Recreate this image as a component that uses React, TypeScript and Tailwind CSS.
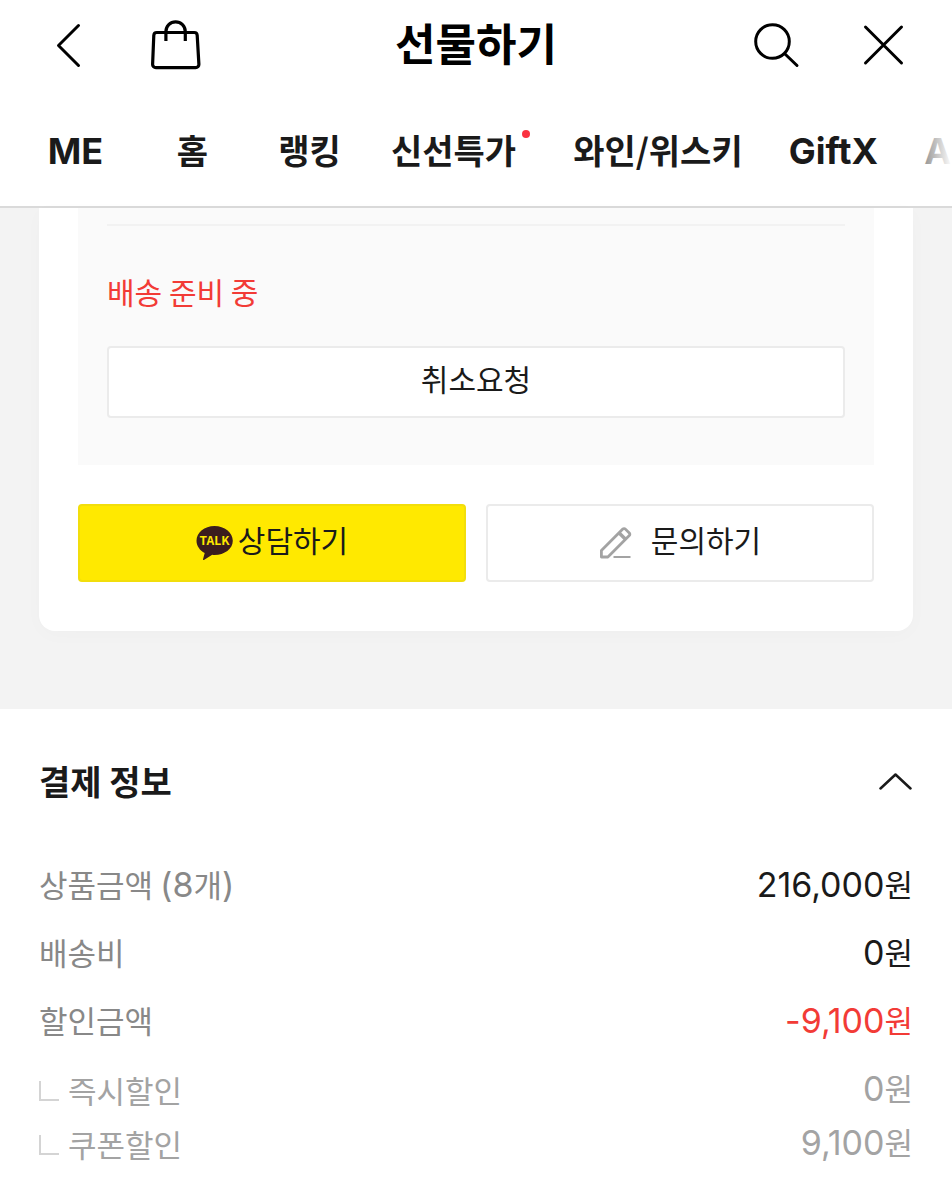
import { useState } from "react";
import type { ReactNode } from "react";

const tabs = [
  { name: "ME", latin: true },
  { name: "홈" },
  { name: "랭킹" },
  { name: "신선특가", isNew: true },
  { name: "와인/위스키" },
  { name: "GiftX", latin: true },
  { name: "A", latin: true },
];

const payments = [
  { label: "상품금액", count: 8, amount: "216,000" },
  { label: "배송비", amount: "0" },
  { label: "할인금액", amount: "-9,100", discount: true },
];

const discounts = [
  { label: "즉시할인", amount: "0" },
  { label: "쿠폰할인", amount: "9,100" },
];

function Latin({ children }: { children: ReactNode }) {
  return <span className="font-['Inter',sans-serif] text-[34px] leading-none">{children}</span>;
}

function BackIcon() {
  return (
    <svg viewBox="0 0 48 48" className="size-12" fill="none" stroke="currentColor" strokeWidth="3" strokeLinecap="round" strokeLinejoin="round" aria-hidden="true">
      <path d="M34.5 4.5 14.5 24.5 34.5 44.5" />
    </svg>
  );
}

function BagIcon() {
  return (
    <svg viewBox="0 0 48 52" className="h-[52px] w-12 overflow-visible" fill="none" stroke="currentColor" strokeWidth="3.200" strokeLinejoin="round" aria-hidden="true">
      <path d="M4.8 13.500h37.400a3 3 0 0 1 3 2.800l1.700 29a3.300 3.300 0 0 1-3.300 3.400H3.900a3.300 3.300 0 0 1-3.300-3.400l1.200-29a3 3 0 0 1 3-2.800Z" />
      <path d="M13.900 22v-9.500a9.700 9.700 0 0 1 19.400 0V22" />
    </svg>
  );
}

function SearchIcon() {
  return (
    <svg viewBox="0 0 48 48" className="size-12" fill="none" stroke="currentColor" strokeWidth="3" strokeLinecap="round" aria-hidden="true">
      <circle cx="20.500" cy="20.500" r="16.800" />
      <path d="M33 33 45 44.500" />
    </svg>
  );
}

function CloseIcon() {
  return (
    <svg viewBox="0 0 48 48" className="size-12" fill="none" stroke="currentColor" strokeWidth="3" strokeLinecap="round" aria-hidden="true">
      <path d="M5.500 6 41.500 42M41.500 6 5.500 42" />
    </svg>
  );
}

function TalkIcon() {
  return (
    <svg viewBox="0 0 38 36" className="h-9 w-[38px]" aria-hidden="true">
      <path d="M18.500 1C8.500 1 .5 7.500.5 15.700c0 5.200 3.300 9.700 8.200 12.300L7 34.300c-.2.700.4 1 .9.600l8.300-5.200c.9.100 1.600.2 2.300.2 10 0 18.300-6 18.300-14.200S28.500 1 18.500 1Z" fill="#3b1d1e" />
      <text x="18.500" y="20" textAnchor="middle" fontFamily="Noto Sans CJK KR, sans-serif" fontSize="12" fontWeight="700" fill="#ffe900">TALK</text>
    </svg>
  );
}

function PencilIcon() {
  return (
    <svg viewBox="0 0 34 34" className="size-[34px]" fill="none" stroke="#a3a3a3" strokeWidth="2.800" strokeLinejoin="round" aria-hidden="true">
      <path d="M2.400 31v-6.500L23.800 3.100a1.800 1.800 0 0 1 2.600 0l3.900 3.900a1.800 1.800 0 0 1 0 2.600L8.900 31Z" />
      <path d="M20.200 7 26.500 13.300" strokeWidth="3.500" />
      <path d="M14.500 31h17" strokeWidth="2" />
    </svg>
  );
}

export default function App() {
  const [open, setOpen] = useState(true);

  return (
    <div className="min-h-screen bg-white font-['Noto_Sans_CJK_KR',sans-serif] text-[#1a1a1a]">
      {/* HEADER */}
      <header className="border-b-2 border-[#dadada]">
        <div className="grid h-[90px] grid-cols-[1fr_auto_1fr] items-center px-11 text-black">
          <div className="flex items-center gap-[60px]">
            <button type="button" aria-label="뒤로">
              <BackIcon />
            </button>
            <button type="button" aria-label="쇼핑백">
              <BagIcon />
            </button>
          </div>
          <h1 className="pb-1.5 text-[44px] leading-none font-bold">선물하기</h1>
          <div className="flex items-center justify-end gap-[60px]">
            <button type="button" aria-label="검색">
              <SearchIcon />
            </button>
            <button type="button" aria-label="닫기">
              <CloseIcon />
            </button>
          </div>
        </div>

        <nav className="relative overflow-hidden">
          <div className="flex h-[116px] items-center pt-1 pl-[17px]">
            {tabs.map((tab) => (
              <a
                key={tab.name}
                href="#"
                className={`flex shrink-0 justify-center pl-[23px] leading-[48px] whitespace-nowrap ${
                  tab.isNew ? "pr-5" : "pr-[23px]"
                } ${tab.name === "A" ? "" : "min-w-[117px]"} ${
                  tab.latin ? "pt-0.5 font-['Inter',sans-serif] text-[36px] font-bold" : "text-[34px] font-semibold"
                }`}
              >
                {tab.name}
                {tab.isNew && <span className="mt-1 ml-1.5 size-2 rounded-full bg-[#fa3240]" />}
              </a>
            ))}
          </div>
          <div className="absolute inset-y-0 right-0 w-12 bg-linear-to-r from-white/20 to-white" />
        </nav>
      </header>

      {/* ORDER CARD */}
      <section className="bg-[#f3f3f3] px-[39px] pb-[78px]">
        <div className="rounded-b-2xl bg-white px-[39px] pb-[49px] shadow-[0_4px_20px_rgba(0,0,0,0.02)]">
          <div className="bg-[#fafafa] px-[29px] pt-4 pb-[47px]">
            <hr className="border-t-2 border-[#f2f2f2]" />
            <p className="pt-[41px] text-[30px] leading-[48px] text-[#f23b36]">배송 준비 중</p>
            <button
              type="button"
              className="mt-[31px] h-[72px] w-full rounded-[4px] border-2 border-[#ebebeb] bg-white pb-2 text-[30px]"
            >
              취소요청
            </button>
          </div>

          <div className="mt-[39px] grid grid-cols-2 gap-5">
            <button
              type="button"
              className="flex h-[78px] items-center justify-center gap-1 rounded-[4px] border-2 border-[#f2de0c] bg-[#ffe900] text-[30px]"
            >
              <TalkIcon />
              <span className="pb-2">상담하기</span>
            </button>
            <button
              type="button"
              className="flex h-[78px] items-center justify-center gap-[18px] rounded-[4px] border-2 border-[#ebebeb] text-[30px]"
            >
              <PencilIcon />
              <span className="pb-2">문의하기</span>
            </button>
          </div>
        </div>
      </section>

      {/* PAYMENT */}
      <section className="px-[39px] pb-[30px]">
        <button
          type="button"
          aria-expanded={open}
          onClick={() => setOpen(!open)}
          className="flex h-[144px] w-full items-center justify-between"
        >
          <h2 className="text-[34px] leading-[48px] font-bold">결제 정보</h2>
          <svg viewBox="0 0 34 20" className={`h-5 w-[34px] ${open ? "" : "rotate-180"}`} fill="none" stroke="currentColor" strokeWidth="2.500" strokeLinecap="round" strokeLinejoin="round" aria-hidden="true">
            <path d="M1.500 17.500 16.500 3.500 31.500 17.500" />
          </svg>
        </button>

        {open && (
          <dl className="pt-1 text-[31px] leading-[54px]">
            {payments.map((item) => (
              <div key={item.label} className="mb-[14px] flex h-[54px] items-baseline justify-between">
                <dt className="text-[#888888]">
                  {item.label}
                  {item.count && (
                    <>
                      {" "}
                      <Latin>({item.count}</Latin>개<Latin>)</Latin>
                    </>
                  )}
                </dt>
                <dd className={item.discount ? "text-[#f23b36]" : ""}>
                  <Latin>{item.amount}</Latin>원
                </dd>
              </div>
            ))}
            {discounts.map((item) => (
              <div key={item.label} className="flex h-[54px] items-baseline justify-between text-[#a3a3a3]">
                <dt className="flex items-center gap-[9px]">
                  <span className="mt-0.5 size-5 border-b-2 border-l-2 border-[#d4d4d4]" />
                  {item.label}
                </dt>
                <dd>
                  <Latin>{item.amount}</Latin>원
                </dd>
              </div>
            ))}
          </dl>
        )}
      </section>
    </div>
  );
}
